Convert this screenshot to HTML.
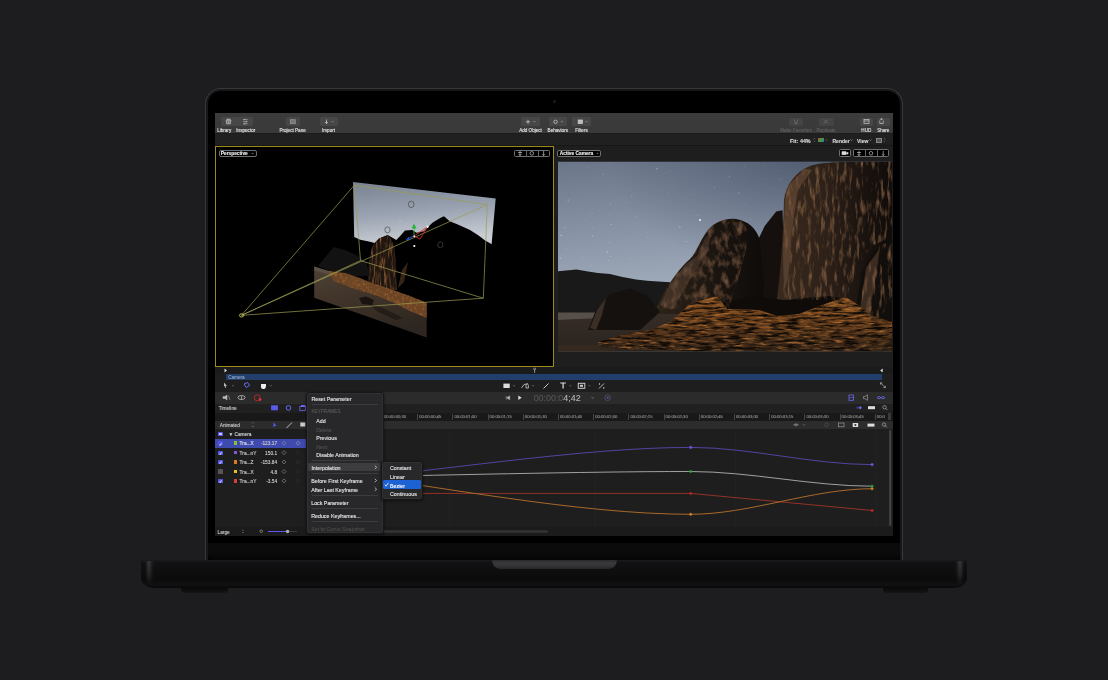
<!DOCTYPE html>
<html><head><meta charset="utf-8">
<style>
html,body{margin:0;padding:0;width:1108px;height:680px;overflow:hidden;background:#1d1d1f;}
*{box-sizing:border-box;}
.a{position:absolute;}
body{font-family:"Liberation Sans",sans-serif;color:#ddd;}
#lid{left:205px;top:88px;width:698px;height:473px;border-radius:16px 16px 0 0;background:#171719;border:1px solid #38383a;border-bottom:none;}
#bez{left:208px;top:91px;width:692px;height:470px;border-radius:13px 13px 0 0;background:#000;}
#chin{left:208px;top:543px;width:692px;height:17px;background:linear-gradient(#0b0b0b,#0a0a0a 60%,#050505);border-radius:0 0 4px 4px;}
#base{left:140.8px;top:560.1px;width:826.4px;height:28.1px;border-radius:0 0 12px 12px / 0 0 10px 10px;background:linear-gradient(#1a1a1c 0%,#111113 10%,#0d0d0e 50%,#0b0b0c 70%,#111112 88%,#09090a 100%);}
.t{position:absolute;white-space:nowrap;line-height:1;filter:blur(0.15px);-webkit-text-stroke:0.12px currentColor;}
svg{position:absolute;left:0;top:0;}
</style></head><body>
<div class="a" id="lid"></div>
<div class="a" id="bez"></div>
<div class="a" id="chin"></div>
<div class="a" style="left:552.6px;top:100.2px;width:3px;height:3px;border-radius:50%;background:#17181c"></div>
<div class="a" id="base"></div>
<div class="a" style="left:144.5px;top:560.5px;width:9px;height:24px;border-radius:0 0 0 6px;background:linear-gradient(90deg,rgba(60,60,62,0) 0%,rgba(60,60,62,0.9) 45%,rgba(50,50,52,0.5) 70%,rgba(40,40,42,0) 100%);-webkit-mask-image:linear-gradient(#000 10%,rgba(0,0,0,0.6) 60%,rgba(0,0,0,0) 100%)"></div>
<div class="a" style="left:954.5px;top:560.5px;width:9px;height:24px;background:linear-gradient(270deg,rgba(60,60,62,0) 0%,rgba(60,60,62,0.9) 45%,rgba(50,50,52,0.5) 70%,rgba(40,40,42,0) 100%);-webkit-mask-image:linear-gradient(#000 10%,rgba(0,0,0,0.6) 60%,rgba(0,0,0,0) 100%)"></div>
<div class="a" style="left:491.5px;top:560.2px;width:125px;height:9px;border-radius:0 0 8px 8px / 0 0 9px 9px;background:linear-gradient(#2a2a2c,#3a3a3c 35%,#333335 70%,#262628)"></div>
<div class="a" style="left:181.4px;top:588px;width:47px;height:4.6px;border-radius:0 0 4px 4px;background:linear-gradient(#0a0a0b,#141415)"></div>
<div class="a" style="left:882.5px;top:588px;width:45px;height:4.6px;border-radius:0 0 4px 4px;background:linear-gradient(#0a0a0b,#141415)"></div>

<!-- screen blocks (page coords) -->
<div class="a" style="left:215px;top:113px;width:678px;height:423px;background:#1e1e1e"></div>
<div class="a" style="left:215px;top:113px;width:678px;height:21px;background:linear-gradient(#3c3c3c,#393939);border-bottom:0.6px solid #1c1c1c"></div>
<div class="a" style="left:215px;top:134px;width:678px;height:12px;background:#202021;border-bottom:0.7px solid #161616"></div>
<div class="a" style="left:215px;top:146px;width:339px;height:221.4px;background:#000;border:1px solid #9c8a1e"></div>
<div class="a" style="left:554px;top:146px;width:339px;height:221.4px;background:#1e1e1f"></div>
<div class="a" style="left:215px;top:367.4px;width:678px;height:6.4px;background:#1b1b1b"></div>
<div class="a" style="left:226.4px;top:373.8px;width:655.6px;height:6.2px;background:#213f6a"></div>
<div class="a" style="left:215px;top:380px;width:678px;height:11.5px;background:#1e1e1e"></div>
<div class="a" style="left:215px;top:391.5px;width:678px;height:12px;background:#2b2b2b"></div>
<div class="a" style="left:215px;top:403.5px;width:678px;height:9px;background:#202020"></div>
<div class="a" style="left:215px;top:412.5px;width:678px;height:8.5px;background:#191919"></div>
<div class="a" style="left:215px;top:421px;width:678px;height:8px;background:#2c2c2c"></div>
<div class="a" style="left:215px;top:429px;width:678px;height:98px;background:#1e1e1e"></div>
<div class="a" style="left:215px;top:527px;width:678px;height:9px;background:#1b1b1b"></div>

<!-- CURVES -->
<svg width="1108" height="680" viewBox="0 0 1108 680">
<g stroke="#262626" stroke-width="0.6"><path d="M450 429 V527 M595 429 V527 M735.3 429 V527 M876 429 V527"/></g>
<g fill="none" stroke-width="0.95">
<path d="M310 482.5 C440 471.5 580 447.4 690.7 447.4 C750 447.4 812 464.6 872.1 464.6" stroke="#5844a8"/>
<path d="M310 477.5 C440 475.5 580 471.5 690.7 471.5 C750 471.5 812 486.2 872.1 486.2" stroke="#a8a8a8"/>
<path d="M310 493.4 L690.7 493.4 L872.1 510.5" stroke="#983428"/>
<path d="M310 469 C440 486.5 580 514.3 690.7 514.3 C750 514.3 812 488.7 872.1 488.7" stroke="#b06e2a"/>
</g>
<g stroke-width="0.6">
<circle cx="690.7" cy="447.4" r="1.3" fill="#7a58e0" stroke="#5a40b0"/>
<circle cx="690.7" cy="471.5" r="1.2" fill="#30b040" stroke="#208a30"/>
<circle cx="690.7" cy="493.4" r="1.2" fill="#d02a2a" stroke="#a02020"/>
<circle cx="690.7" cy="514.3" r="1.2" fill="#e08a30" stroke="#b06820"/>
<circle cx="872.1" cy="464.6" r="1.3" fill="#7a58e0" stroke="#5a40b0"/>
<circle cx="872.1" cy="486.2" r="1.2" fill="#30b040" stroke="#208a30"/>
<circle cx="872.1" cy="488.7" r="1.2" fill="#e08a30" stroke="#b06820"/>
<circle cx="872.1" cy="510.5" r="1.2" fill="#d02a2a" stroke="#a02020"/>
</g>
<rect x="889.2" y="430" width="2" height="96" rx="1" fill="#444"/>
</svg>
<!-- PHOTO -->
<svg width="1108" height="680" viewBox="0 0 1108 680">
<defs>
<clipPath id="pc"><rect x="558" y="161.8" width="334" height="189.4"/></clipPath>
<linearGradient id="sky" x1="0" y1="0" x2="0.15" y2="1">
<stop offset="0" stop-color="#6a7588"/><stop offset="0.5" stop-color="#919cae"/><stop offset="1" stop-color="#b8c1cc"/></linearGradient>
<radialGradient id="skyd" cx="0.75" cy="0" r="0.6">
<stop offset="0" stop-color="#2e3850" stop-opacity="0.45"/><stop offset="1" stop-color="#2e3850" stop-opacity="0"/></radialGradient>
<linearGradient id="gnd" x1="0" y1="0" x2="0" y2="1">
<stop offset="0" stop-color="#3a302a"/><stop offset="1" stop-color="#2a231e"/></linearGradient>
<linearGradient id="cliff" x1="0" y1="0" x2="1" y2="0">
<stop offset="0" stop-color="#3a2a1e"/><stop offset="0.45" stop-color="#2c2018"/><stop offset="0.75" stop-color="#1a130f"/><stop offset="1" stop-color="#100c0a"/></linearGradient>
<linearGradient id="dome" x1="0" y1="0" x2="1" y2="0">
<stop offset="0" stop-color="#302419"/><stop offset="0.45" stop-color="#1e1712"/><stop offset="1" stop-color="#0e0b09"/></linearGradient>
<linearGradient id="grs" x1="0" y1="0" x2="0" y2="1" gradientUnits="objectBoundingBox">
<stop offset="0" stop-color="#8a5628"/><stop offset="0.35" stop-color="#74461f"/><stop offset="0.75" stop-color="#4e321c"/><stop offset="1" stop-color="#30241a"/></linearGradient>
<filter id="tex" x="0" y="0" width="1" height="1" color-interpolation-filters="sRGB">
<feTurbulence type="fractalNoise" baseFrequency="0.25 0.06" numOctaves="3" seed="3"/>
<feColorMatrix type="matrix" values="0 0 0 0 0.50  0 0 0 0 0.36  0 0 0 0 0.25  2.8 0 0 0 -1.4"/>
</filter>
<filter id="texd" x="0" y="0" width="1" height="1" color-interpolation-filters="sRGB">
<feTurbulence type="fractalNoise" baseFrequency="0.2 0.08" numOctaves="2" seed="11"/>
<feColorMatrix type="matrix" values="0 0 0 0 0.05  0 0 0 0 0.04  0 0 0 0 0.03  2.4 0 0 0 -1.0"/>
</filter>
<filter id="tex2" x="0" y="0" width="1" height="1" color-interpolation-filters="sRGB">
<feTurbulence type="fractalNoise" baseFrequency="0.09 0.45" numOctaves="3" seed="7"/>
<feColorMatrix type="matrix" values="0 0 0 0 0.74  0 0 0 0 0.45  0 0 0 0 0.2  2.4 0 0 0 -1.15"/>
<feGaussianBlur stdDeviation="0.35"/>
</filter>
<filter id="tex3" x="0" y="0" width="1" height="1" color-interpolation-filters="sRGB">
<feTurbulence type="fractalNoise" baseFrequency="0.07 0.4" numOctaves="3" seed="5"/>
<feColorMatrix type="matrix" values="0 0 0 0 0.06  0 0 0 0 0.04  0 0 0 0 0.02  3.0 0 0 0 -1.2"/>
<feGaussianBlur stdDeviation="0.3"/>
</filter>
<filter id="texdome" x="0" y="0" width="1" height="1" color-interpolation-filters="sRGB">
<feTurbulence type="fractalNoise" baseFrequency="0.14 0.09" numOctaves="3" seed="21"/>
<feColorMatrix type="matrix" values="0 0 0 0 0.44  0 0 0 0 0.32  0 0 0 0 0.23  2.4 0 0 0 -1.05"/>
</filter>
<filter id="soft" color-interpolation-filters="sRGB"><feGaussianBlur stdDeviation="0.5"/></filter>
<clipPath id="litc"><path d="M784 300 C782 260 783 230 784.5 200 C786 185 795 172 810 166 C820 162 850 161 892 161 L892 236 L872 246 L860 262 L846 300 Z M856 330 L866 268 L880 246 L892 240 L892 300 L872 330 Z"/></clipPath>
<clipPath id="domec"><path d="M657 308 C662 295 675 272 690 259 C697 252 700 240 708 230 C716 221 726 218 736 219 C744 220 750 226 746 250 L738 280 L728 310 Z"/></clipPath>
<clipPath id="grassc"><path d="M598 342 L625 334 L650 330 L670 322 L690 304 L717 296 L727 309 L759 310 L777 316 L799 314 L825 304 L845 297 L854 302 L872 316 L892 322 L892 352 L700 352 L600 348 Z"/></clipPath>
</defs>
<g clip-path="url(#pc)">
<rect x="557" y="161" width="336" height="191" fill="url(#sky)"/>
<rect x="557" y="161" width="336" height="191" fill="url(#skyd)"/>
<g fill="#fff">
<circle cx="700" cy="220" r="0.9"/><circle cx="763.9" cy="165.0" r="0.35" opacity="0.46"/><circle cx="602.9" cy="174.1" r="0.5" opacity="0.39"/><circle cx="693.9" cy="165.5" r="0.3" opacity="0.45"/><circle cx="693.1" cy="215.0" r="0.35" opacity="0.71"/><circle cx="560.1" cy="257.1" r="0.4" opacity="0.50"/><circle cx="666.4" cy="172.9" r="0.3" opacity="0.51"/><circle cx="668.8" cy="193.2" r="0.3" opacity="0.68"/><circle cx="679.9" cy="227.1" r="0.5" opacity="0.75"/><circle cx="674.4" cy="184.7" r="0.3" opacity="0.37"/><circle cx="631.4" cy="196.1" r="0.3" opacity="0.73"/><circle cx="610.4" cy="203.9" r="0.35" opacity="0.67"/><circle cx="778.1" cy="170.4" r="0.3" opacity="0.59"/><circle cx="636.8" cy="216.5" r="0.35" opacity="0.80"/><circle cx="568.3" cy="199.2" r="0.35" opacity="0.38"/><circle cx="765.0" cy="178.9" r="0.3" opacity="0.46"/><circle cx="738.8" cy="193.0" r="0.5" opacity="0.54"/><circle cx="745.9" cy="204.7" r="0.3" opacity="0.58"/><circle cx="587.3" cy="167.6" r="0.3" opacity="0.42"/><circle cx="609.5" cy="242.3" r="0.5" opacity="0.38"/><circle cx="835.2" cy="163.4" r="0.3" opacity="0.66"/><circle cx="730.9" cy="193.5" r="0.35" opacity="0.40"/><circle cx="698.0" cy="215.5" r="0.35" opacity="0.79"/><circle cx="592.3" cy="235.8" r="0.5" opacity="0.62"/><circle cx="607.2" cy="252.0" r="0.5" opacity="0.78"/><circle cx="750.9" cy="219.7" r="0.3" opacity="0.77"/><circle cx="657.0" cy="168.8" r="0.5" opacity="0.78"/><circle cx="585.6" cy="219.3" r="0.3" opacity="0.79"/><circle cx="729.5" cy="176.8" r="0.4" opacity="0.78"/><circle cx="611.2" cy="224.3" r="0.5" opacity="0.54"/><circle cx="626.2" cy="225.6" r="0.3" opacity="0.67"/><circle cx="686.5" cy="241.3" r="0.35" opacity="0.55"/><circle cx="724.7" cy="176.3" r="0.3" opacity="0.38"/><circle cx="564.8" cy="227.4" r="0.5" opacity="0.45"/><circle cx="580.9" cy="236.5" r="0.3" opacity="0.38"/><circle cx="568.1" cy="201.0" r="0.5" opacity="0.46"/><circle cx="773.4" cy="187.3" r="0.3" opacity="0.68"/><circle cx="636.2" cy="217.8" r="0.4" opacity="0.44"/><circle cx="589.2" cy="212.9" r="0.4" opacity="0.53"/><circle cx="577.5" cy="247.9" r="0.3" opacity="0.46"/><circle cx="619.2" cy="214.9" r="0.4" opacity="0.43"/><circle cx="582.3" cy="257.3" r="0.5" opacity="0.39"/><circle cx="562.8" cy="173.0" r="0.3" opacity="0.42"/><circle cx="714.4" cy="187.2" r="0.4" opacity="0.76"/><circle cx="611.0" cy="162.3" r="0.4" opacity="0.47"/><circle cx="746.1" cy="221.3" r="0.5" opacity="0.42"/><circle cx="617.8" cy="232.2" r="0.3" opacity="0.53"/><circle cx="744.4" cy="166.7" r="0.3" opacity="0.54"/><circle cx="685.4" cy="241.3" r="0.35" opacity="0.56"/><circle cx="561.0" cy="235.3" r="0.5" opacity="0.80"/><circle cx="581.6" cy="187.2" r="0.35" opacity="0.41"/><circle cx="670.4" cy="170.1" r="0.3" opacity="0.52"/><circle cx="608.8" cy="260.4" r="0.35" opacity="0.63"/><circle cx="560.5" cy="258.4" r="0.35" opacity="0.77"/><circle cx="591.4" cy="265.6" r="0.35" opacity="0.40"/><circle cx="592.5" cy="227.3" r="0.35" opacity="0.48"/><circle cx="625.8" cy="202.5" r="0.35" opacity="0.58"/><circle cx="638.9" cy="269.2" r="0.3" opacity="0.39"/><circle cx="694.4" cy="194.6" r="0.3" opacity="0.50"/><circle cx="610.0" cy="214.1" r="0.4" opacity="0.60"/><circle cx="780.5" cy="179.6" r="0.3" opacity="0.73"/><circle cx="745.6" cy="179.5" r="0.3" opacity="0.37"/><circle cx="673.2" cy="242.5" r="0.3" opacity="0.51"/><circle cx="610.3" cy="256.4" r="0.3" opacity="0.75"/><circle cx="566.0" cy="248.9" r="0.35" opacity="0.70"/><circle cx="690.6" cy="241.0" r="0.3" opacity="0.47"/><circle cx="629.6" cy="258.4" r="0.4" opacity="0.51"/><circle cx="629.8" cy="239.9" r="0.4" opacity="0.50"/><circle cx="647.9" cy="237.7" r="0.4" opacity="0.66"/><circle cx="566.9" cy="265.5" r="0.35" opacity="0.43"/><circle cx="592.9" cy="213.3" r="0.35" opacity="0.55"/>
</g>
<rect x="555" y="318" width="340" height="36" fill="#2e2620"/>
<g filter="url(#soft)">
<path d="M555 271.5 L566 270.5 L576.5 269.5 L588 271.5 L598 273 L610 274 L622.5 277 L636 279.5 L647 280.7 L670 282.3 L690 290 L690 315 L555 315 Z" fill="#1a1919"/>
<rect x="555" y="312.5" width="45" height="8" fill="#57504a"/>
<path d="M555 320 L600 318 L660 312 L892 300 L892 352 L555 352 Z" fill="url(#gnd)"/>
<!-- behind dark rock -->
<path d="M752 312 L758 240 L764.7 226 L776.2 211.6 L782.5 210.2 L786 312 Z" fill="#15100e"/>
<!-- dome -->
<path d="M652 314 L657 307 C662 295 675 272 690 259 C697 252 700 240 708 230 C716 221 726 218 736 219 C748 221 756 228 760 240 L764 290 L758 314 Z" fill="url(#dome)"/>
<!-- cliff -->
<path d="M776 305 C780 280 783 240 784 200 C786 185 795 172 810 166 C820 162 850 161 892 161 L892 352 L780 352 Z" fill="url(#cliff)"/>
<path d="M852 330 L862 272 L874 250 L892 240 L892 352 L850 352 Z" fill="#120e0b"/>
<!-- left small rock -->
<path d="M588 330 L596 310 L610 294 L630 288.5 L648 296 L660 312 L640 330 Z" fill="#15110f"/>
<path d="M590 328 L597 310 L606 298 L602 315 L596 330 Z" fill="#4a3a30" opacity="0.7"/>
<!-- foreground dark rocks -->
<path d="M700 330 L722 304 L752 296 L784 300 L830 296 L850 300 L845 330 L740 338 Z" fill="#0f0b09"/>
</g>
<g clip-path="url(#litc)" filter="url(#soft)"><rect x="650" y="161" width="243" height="191" filter="url(#tex)"/></g>
<g clip-path="url(#domec)" filter="url(#soft)"><rect x="650" y="210" width="120" height="110" filter="url(#texdome)"/></g>
<!-- lit edges -->
<path d="M784.8 200 L790.6 183 L804.9 168.6 L812 170 L798 190 L792 230 L788 280 L784 290 L783 255 Z" fill="#7a5a42" opacity="0.45" filter="url(#soft)"/>
<path d="M660 305 L670 284 L686 264 L697 256 L704 240 L712 230 L708 250 L696 270 L684 290 L672 310 Z" fill="#6e5240" opacity="0.35" filter="url(#soft)"/>
<path d="M857 330 L866 268 L880 248 L874 290 L864 330 Z" fill="#7a5840" opacity="0.4" filter="url(#soft)"/>
<!-- grass -->
<path d="M598 342 L625 334 L650 330 L670 322 L690 304 L717 296 L727 309 L759 310 L777 316 L799 314 L825 304 L845 297 L854 302 L872 316 L892 322 L892 352 L700 352 L600 348 Z" fill="url(#grs)" filter="url(#soft)"/>
<g clip-path="url(#grassc)"><rect x="590" y="270" width="303" height="82" filter="url(#tex2)"/><rect x="590" y="270" width="303" height="82" filter="url(#tex3)"/></g>
<rect x="555" y="345" width="60" height="8" fill="#3a2c20" opacity="0.6"/>
</g>
</svg>
<!-- PERSPECTIVE -->
<svg width="1108" height="680" viewBox="0 0 1108 680">
<defs>
<clipPath id="lvc"><rect x="216" y="147" width="337" height="219.4"/></clipPath>
<linearGradient id="psky" x1="0" y1="0" x2="0.2" y2="1">
<stop offset="0" stop-color="#78818f"/><stop offset="0.55" stop-color="#9aa3b2"/><stop offset="1" stop-color="#c8cdd3"/></linearGradient>
<linearGradient id="pgnd" x1="0" y1="0" x2="0.3" y2="1">
<stop offset="0" stop-color="#4e4034"/><stop offset="0.5" stop-color="#40342a"/><stop offset="1" stop-color="#2e2620"/></linearGradient>
<clipPath id="pgc"><path d="M328 271 L345 273 L360 278 L372 283 L390 289 L410 296 L426.7 302.8 L426.7 318 L410 311 L392 302 L375 295 L352 288 L334 281 Z"/></clipPath>
<clipPath id="plit"><path d="M367 290 L369 262 L372 247 L374.7 242.9 L379 238.5 L383 237 L387.7 234.9 L391 238.5 L394 246 L396 262 L397 290 Z"/></clipPath>
<filter id="ptex" x="0" y="0" width="1" height="1" color-interpolation-filters="sRGB">
<feTurbulence type="fractalNoise" baseFrequency="0.4 0.3" numOctaves="2" seed="4"/>
<feColorMatrix type="matrix" values="0 0 0 0 0.64  0 0 0 0 0.40  0 0 0 0 0.2  2.0 0 0 0 -0.95"/>
</filter>
<filter id="ptex2" x="0" y="0" width="1" height="1" color-interpolation-filters="sRGB">
<feTurbulence type="fractalNoise" baseFrequency="0.5 0.07" numOctaves="2" seed="9"/>
<feColorMatrix type="matrix" values="0 0 0 0 0.58  0 0 0 0 0.38  0 0 0 0 0.22  2.6 0 0 0 -1.2"/>
</filter>
</defs>
<g clip-path="url(#lvc)">
<!-- back plane (sky + rocks) -->
<path d="M353 181.9 L495.7 198.4 L491.6 244.3 L484.4 240 L478.6 235.6 L470 229.9 L458.4 224.8 L449.7 221.2 L444 216.2 L441.1 217.6 L432.4 222.7 L423.8 231.3 L416.5 232.8 L412.2 229.9 L405 230.6 L400.6 235.6 L396.3 240 L387.7 234.9 L379 238.5 L374.7 242.9 L368.9 241.4 L360.2 239.7 L354.2 237.1 Z" fill="url(#psky)"/>
<!-- lit rock -->
<path d="M367 290 L369 262 L372 247 L374.7 242.9 L379 238.5 L383 237 L387.7 234.9 L391 238.5 L394 246 L396 262 L397 290 Z" fill="#1e150f"/>
<g clip-path="url(#plit)"><rect x="364" y="233" width="34" height="58" filter="url(#ptex2)"/></g>
<path d="M398 288 L402 270 L408 262 L404 282 Z" fill="#6a4a30" opacity="0.5"/>
<!-- dim mountains between planes -->
<path d="M318 266 L333.7 247 L345 250 L358 256 L366 262 L370 276 L340 276 Z" fill="#131212"/>
<!-- ground plane -->
<path d="M314.2 266.4 L426.7 302.8 L426.7 337.4 L314.2 297.7 Z" fill="url(#pgnd)"/>
<path d="M314.2 266.4 L340 274.5 L338 277 L314.2 270.5 Z" fill="#5e544a" opacity="0.8"/>
<path d="M328 271 L345 273 L360 278 L372 283 L390 289 L410 296 L426.7 302.8 L426.7 318 L410 311 L392 302 L375 295 L352 288 L334 281 Z" fill="#6a4424"/>
<g clip-path="url(#pgc)"><rect x="314" y="266" width="114" height="72" filter="url(#ptex)"/></g>
<path d="M359 298 L366 296.5 L374 300 L372 305 L362 304 Z" fill="#15110e" opacity="0.9"/>
<path d="M368 303 L385 309 L403 318 L396 320 L378 312 Z" fill="#18130f" opacity="0.6"/>
<!-- stars -->
<g fill="#dde"><circle cx="400" cy="221" r="0.5"/><circle cx="430" cy="204" r="0.3"/><circle cx="375" cy="200" r="0.3"/><circle cx="460" cy="210" r="0.3"/></g>
<!-- circles -->
<g fill="none" stroke="#3a3a3a" stroke-width="0.6">
<ellipse cx="411.2" cy="204.4" rx="2.8" ry="3.2"/><ellipse cx="387.5" cy="229.9" rx="2.6" ry="3"/><ellipse cx="440.3" cy="244.8" rx="2.6" ry="3" stroke="#555"/>
</g>
<!-- wireframe -->
<g fill="none" stroke="#9c9c52" stroke-width="0.75" opacity="0.95">
<path d="M354.4 185.1 L487.3 204.6 L483.3 298.2 L360.5 260.6 Z"/>
<path d="M241.5 315.3 L354.4 185.1 M241.5 315.3 L487.3 204.6 M241.5 315.3 L483.3 298.2 M241.5 315.3 L360.5 260.6"/>
</g>
<ellipse cx="241.6" cy="315.4" rx="2.2" ry="1.6" fill="none" stroke="#c8c85a" stroke-width="0.9"/>
<!-- gizmo -->
<g stroke-width="0.9" fill="none">
<path d="M414 236 L414 227" stroke="#28b43c"/>
<path d="M414 236 L408 238.5" stroke="#2850d8"/>
<path d="M414 236 L427.5 227 L420 239 Z" stroke="#d02828"/>
</g>
<path d="M411.5 228.5 L414 223.5 L416.5 228.5 Z" fill="#28b43c"/>
<path d="M409 237 L405.5 239.5 L410 240 Z" fill="#2850d8"/>
<circle cx="427.6" cy="226.8" r="1.1" fill="#fff"/>
<circle cx="414.3" cy="246" r="1.1" fill="#fff"/>
<circle cx="414.3" cy="236.3" r="0.9" fill="#fff"/>
</g>
</svg>
<!-- UI -->
<div class="a" style="left:221px;top:117.4px;width:32px;height:8.6px;background:#474747;border-radius:1.5px"></div>
<div class="a" style="left:285.5px;top:117.4px;width:14.5px;height:8.6px;background:#474747;border-radius:1.5px"></div>
<div class="a" style="left:319.8px;top:117.4px;width:18px;height:8.6px;background:#474747;border-radius:1.5px"></div>
<div class="a" style="left:521.3px;top:117.4px;width:18.4px;height:8.6px;background:#474747;border-radius:1.5px"></div>
<div class="a" style="left:548.7px;top:117.4px;width:18.3px;height:8.6px;background:#474747;border-radius:1.5px"></div>
<div class="a" style="left:572.2px;top:117.4px;width:18.8px;height:8.6px;background:#474747;border-radius:1.5px"></div>
<div class="a" style="left:789px;top:117.5px;width:14px;height:8.2px;background:#444;border-radius:1.5px"></div>
<div class="a" style="left:819px;top:117.5px;width:14.5px;height:8.2px;background:#444;border-radius:1.5px"></div>
<div class="a" style="left:860px;top:117.5px;width:13px;height:8.2px;background:#474747;border-radius:1.5px"></div>
<div class="a" style="left:877px;top:117.5px;width:13px;height:8.2px;background:#474747;border-radius:1.5px"></div>
<div class="t" style="left:164.2px;width:120px;text-align:center;top:129.19px;font-size:4.6px;color:#e2e2e2;font-weight:normal;">Library</div>
<div class="t" style="left:185.8px;width:120px;text-align:center;top:129.19px;font-size:4.6px;color:#e2e2e2;font-weight:normal;">Inspector</div>
<div class="t" style="left:232.60000000000002px;width:120px;text-align:center;top:129.19px;font-size:4.6px;color:#e2e2e2;font-weight:normal;">Project Pane</div>
<div class="t" style="left:268.5px;width:120px;text-align:center;top:129.19px;font-size:4.6px;color:#e2e2e2;font-weight:normal;">Import</div>
<div class="t" style="left:470.5px;width:120px;text-align:center;top:129.19px;font-size:4.6px;color:#e2e2e2;font-weight:normal;">Add Object</div>
<div class="t" style="left:497.79999999999995px;width:120px;text-align:center;top:129.19px;font-size:4.6px;color:#e2e2e2;font-weight:normal;">Behaviors</div>
<div class="t" style="left:521.5px;width:120px;text-align:center;top:129.19px;font-size:4.6px;color:#e2e2e2;font-weight:normal;">Filters</div>
<div class="t" style="left:736px;width:120px;text-align:center;top:129.19px;font-size:4.6px;color:#5e5e5e;font-weight:normal;">Make Favorites</div>
<div class="t" style="left:766px;width:120px;text-align:center;top:129.19px;font-size:4.6px;color:#5e5e5e;font-weight:normal;">Replicate</div>
<div class="t" style="left:806.3px;width:120px;text-align:center;top:129.19px;font-size:4.6px;color:#e2e2e2;font-weight:normal;">HUD</div>
<div class="t" style="left:823.3px;width:120px;text-align:center;top:129.19px;font-size:4.6px;color:#e2e2e2;font-weight:normal;">Share</div>
<svg width="1108" height="680" viewBox="0 0 1108 680">
<g fill="none" stroke="#d8d8d8" stroke-width="0.7">
<path d="M226.2 120.2 h4.6 l-0.5 3.6 h-3.6 z M227 120.2 v-1 h3 v1"/><circle cx="228.5" cy="122" r="0.8"/>
<path d="M243 119.6 h4.6 M243 121.7 h4.6 M243 123.8 h4.6" stroke-width="0.5"/><path d="M244.3 119 v1.2 M246.5 121.1 v1.2 M244.8 123.2 v1.2" stroke-width="0.7"/>
<rect x="290.3" y="119.7" width="5" height="4" fill="#777" stroke="#999"/>
<path d="M326.5 119.5 v4 M325 122 l1.5 1.6 l1.5 -1.6"/>
<path d="M331.7 121.2 l0.9 0.9 l0.9 -0.9" stroke="#aaa"/>
<path d="M528 119.8 v4 M526 121.8 h4"/>
<path d="M533.5 121.2 l0.9 0.9 l0.9 -0.9" stroke="#aaa"/>
<circle cx="555.5" cy="121.8" r="1.7"/>
<path d="M561 121.2 l0.9 0.9 l0.9 -0.9" stroke="#aaa"/>
<rect x="578.2" y="120" width="4.2" height="3.5" fill="#bbb"/>
<path d="M585.5 121.2 l0.9 0.9 l0.9 -0.9" stroke="#aaa"/>
<path d="M794 119.5 l1 2 v2 h2 v-2 l1 -2" stroke="#777"/>
<path d="M824 119.5 l4 4 M828 119.5 l-4 4" stroke="#777"/>
<rect x="864" y="119.5" width="5" height="4" stroke="#ccc"/>
<path d="M864 121 h5" stroke="#ccc"/>
<path d="M881.5 120 v-1.5 l0.0 0 M880.2 119.6 l1.3 -1.3 l1.3 1.3 M879.8 120.5 v3 h3.4 v-3" stroke="#ccc"/>
</g>
</svg>
<div class="t" style="left:790px;top:138.91000000000003px;font-size:5.4px;color:#d8d8d8;font-weight:bold;">Fit: 44%</div>
<div class="a" style="left:818px;top:137.6px;width:5.5px;height:4.6px;background:linear-gradient(135deg,#c04040,#40a040 50%,#4060d0);"></div>
<div class="t" style="left:832.5px;top:139.05px;font-size:5px;color:#d8d8d8;font-weight:bold;">Render</div>
<div class="t" style="left:857px;top:139.05px;font-size:5px;color:#d8d8d8;font-weight:bold;">View</div>
<div class="a" style="left:876px;top:137.5px;width:6px;height:5px;background:#555;border:0.6px solid #888"></div>
<div class="a" style="left:218.6px;top:149.6px;width:38px;height:7.4px;background:#000;border:0.7px solid #707070;border-radius:2px"></div>
<div class="t" style="left:220.8px;top:152.22px;font-size:4.8px;color:#f2f2f2;font-weight:bold;">Perspective</div>
<div class="a" style="left:514px;top:149.6px;width:35.6px;height:7.4px;background:#000;border:0.7px solid #707070;border-radius:1.5px"></div>
<div class="a" style="left:526px;top:149.6px;width:0.6px;height:7.4px;background:#666;"></div>
<div class="a" style="left:537.5px;top:149.6px;width:0.6px;height:7.4px;background:#666;"></div>
<div class="a" style="left:557.4px;top:149.6px;width:44px;height:7.4px;background:#000;border:0.7px solid #707070;border-radius:2px"></div>
<div class="t" style="left:559.8px;top:152.22px;font-size:4.8px;color:#f2f2f2;font-weight:bold;">Active Camera</div>
<div class="a" style="left:838.5px;top:149.4px;width:12.5px;height:7.6px;background:#000;border:0.7px solid #707070;border-radius:1.5px"></div>
<div class="a" style="left:853px;top:149.4px;width:36.4px;height:7.6px;background:#000;border:0.7px solid #707070;border-radius:1.5px"></div>
<div class="a" style="left:865px;top:149.4px;width:0.6px;height:7.6px;background:#666;"></div>
<div class="a" style="left:877px;top:149.4px;width:0.6px;height:7.6px;background:#666;"></div>
<svg width="1108" height="680" viewBox="0 0 1108 680">
<g fill="none" stroke="#e0e0e0" stroke-width="0.6">
<path d="M520 150.8 v5 M518 152.5 h4 M518.6 154 l1.4 1.5 l1.4 -1.5"/>
<circle cx="531.8" cy="153.3" r="1.8"/>
<path d="M543.6 151 v4.5 M542.3 154.3 l1.3 1.3 l1.3 -1.3"/>
<rect x="842" y="151.7" width="4" height="3" fill="#ddd"/><path d="M846 153.2 l2 -1 v2 z" fill="#ddd"/>
<path d="M859 150.8 v5 M857 152.5 h4 M857.6 154 l1.4 1.5 l1.4 -1.5"/>
<circle cx="871" cy="153.3" r="1.8"/>
<path d="M883.2 151 v4.5 M881.9 154.3 l1.3 1.3 l1.3 -1.3"/>
</g>
</svg>
<div class="t" style="left:228.2px;top:376.39px;font-size:4.6px;color:#8ea4c4;font-weight:normal;">Camera</div>
<svg width="1108" height="680" viewBox="0 0 1108 680">
<path d="M224.5 368.5 l2.5 2 l-2.5 2 z" fill="#ddd"/>
<path d="M882.7 368.5 l-2.5 2 l2.5 2 z" fill="#ddd"/>
<circle cx="534.6" cy="369" r="1" fill="none" stroke="#ccc" stroke-width="0.6"/><path d="M534.6 370 v3" stroke="#ccc" stroke-width="0.6"/>
<!-- tools row -->
<g fill="#bbb" stroke="none">
<path d="M224 382.5 l3 3.5 h-1.5 l0.8 2 h-0.8 l-0.8 -2 l-0.7 0.8 z"/>
</g>
<g fill="none" stroke="#999" stroke-width="0.6">
<path d="M232.3 385.3 l0.9 0.9 l0.9 -0.9 M269.8 385.3 l0.9 0.9 l0.9 -0.9 M513.2 385.3 l0.9 0.9 l0.9 -0.9 M532.3 385.3 l0.9 0.9 l0.9 -0.9 M569.5 385.3 l0.9 0.9 l0.9 -0.9 M588.5 385.3 l0.9 0.9 l0.9 -0.9"/>
</g>
<path d="M244 384 l3.5 -1.5 l2.2 3 l-3.5 2 z" fill="none" stroke="#6a6af0" stroke-width="1"/>
<path d="M261 384 v3 q0 2 2 2 h1.5 q1.5 -1 1.5 -3 v-2 z" fill="#eee"/>
<rect x="503.4" y="383.6" width="6.3" height="4.4" fill="#ddd"/>
<path d="M521.5 388 q2.5 -5 5 -4 M526 385.5 l1.2 -2.2 l1.2 2.2 v2.5 h-2.4 z" fill="none" stroke="#ccc" stroke-width="0.8"/>
<path d="M543.5 388.5 l5 -5" stroke="#ddd" stroke-width="0.9"/>
<path d="M560.3 383 h5.6 M563.1 383 v5.5" stroke="#ddd" stroke-width="1.2"/>
<rect x="578.3" y="383.3" width="6.5" height="5" fill="none" stroke="#ccc" stroke-width="1"/><rect x="580" y="384.8" width="3" height="2" fill="#ccc"/>
<path d="M599 388.5 l5 -5" stroke="#ddd" stroke-width="0.8"/><circle cx="599.5" cy="384" r="0.7" fill="#ddd"/><circle cx="603.8" cy="388" r="0.7" fill="#ddd"/>
<path d="M880.5 382.8 l4.8 4.8 M880.5 382.8 h1.8 M880.5 382.8 v1.8 M885.3 387.6 h-1.8 M885.3 387.6 v-1.8" stroke="#bbb" stroke-width="0.7"/>
<!-- transport row -->
<path d="M223 396.5 h2 l2 -1.5 v5 l-2 -1.5 h-2 z M228.5 395.5 l1.5 4.5" fill="#bbb" stroke="#bbb" stroke-width="0.5"/>
<ellipse cx="241.5" cy="397.5" rx="3.6" ry="2" fill="none" stroke="#ccc" stroke-width="0.7"/><path d="M241.5 396 v4" stroke="#ccc" stroke-width="0.6"/>
<circle cx="257.3" cy="397.8" r="3" fill="none" stroke="#cc2a2a" stroke-width="0.8"/><circle cx="260" cy="399.5" r="1.4" fill="#e03030"/>
<path d="M506.2 395.9 v3.8 M509.7 395.9 l-3 1.9 l3 1.9 z" fill="#bbb" stroke="#bbb" stroke-width="0.5"/>
<path d="M518.3 395.6 l3.4 2.2 l-3.4 2.2 z" fill="#ddd"/>
<path d="M591.6 397.3 l0.9 0.9 l0.9 -0.9" fill="none" stroke="#bbb" stroke-width="0.6"/>
<circle cx="607.6" cy="397.7" r="2.8" fill="none" stroke="#5a5a6a" stroke-width="0.7"/><circle cx="607.8" cy="397.6" r="0.9" fill="#6a5af0"/>
<rect x="849" y="395" width="4.5" height="5.3" fill="none" stroke="#6a6af0" stroke-width="0.8"/><path d="M849 397.6 h4.5" stroke="#6a6af0" stroke-width="0.6"/>
<path d="M863.5 396.5 h1.5 l2.5 -1.7 v5.6 l-2.5 -1.7 h-1.5 z" fill="none" stroke="#aaa" stroke-width="0.6"/>
<path d="M877 397.7 q2 -2.5 4 0 q2 2.5 4 0 q-2 -2.5 -4 0 q-2 2.5 -4 0" fill="none" stroke="#6a6af0" stroke-width="0.8"/>
<!-- timeline header -->
<rect x="271.1" y="405.3" width="6.8" height="5" fill="#5a5ae8"/>
<circle cx="288.5" cy="407.9" r="2.3" fill="none" stroke="#6a6af0" stroke-width="1"/>
<rect x="299.8" y="406.4" width="5.6" height="4" fill="none" stroke="#6a6af0" stroke-width="0.8"/><rect x="301" y="405" width="4.4" height="2" fill="#6a6af0"/>
<path d="M856 407.8 l1.5 -1.5 l1.5 1.5 l-1.5 1.5 z" fill="#3a3a7a"/><path d="M858.5 407.8 l1.7 -1.7 l1.7 1.7 l-1.7 1.7 z" fill="#6a6af0"/>
<rect x="868" y="406.2" width="7" height="3" fill="#ddd"/>
<circle cx="884.5" cy="407.2" r="1.7" fill="none" stroke="#bbb" stroke-width="0.6"/><path d="M885.7 408.4 l1.6 1.6" stroke="#bbb" stroke-width="0.7"/>
<!-- animated row -->
<path d="M273.4 422.5 l3.3 3.2 l-2 0.3 l-1.3 1.5 z" fill="#5a5ae8"/>
<path d="M286.5 428 l5.5 -5.5" stroke="#ddd" stroke-width="0.8"/>
<rect x="300.3" y="422.5" width="5" height="4" fill="#ccc"/>
<path d="M251.8 423.3 l1 -1 l1 1 M251.8 426 l1 1 l1 -1" fill="none" stroke="#999" stroke-width="0.5"/>
<path d="M796 423.5 l2.5 1.3 l-2.5 1.3 l-2.5 -1.3 z M798.5 424.8 h-5" fill="#777" stroke="#777" stroke-width="0.5"/>
<path d="M803.3 424.4 l0.9 0.9 l0.9 -0.9" fill="none" stroke="#999" stroke-width="0.6"/>
<circle cx="826.5" cy="424.8" r="1.8" fill="none" stroke="#555" stroke-width="0.6"/>
<rect x="838.5" y="423" width="5.5" height="3.8" fill="none" stroke="#aaa" stroke-width="0.6"/>
<rect x="852.7" y="423" width="5.5" height="4" fill="#ddd"/><circle cx="855.4" cy="425" r="1" fill="#333"/>
<rect x="867.5" y="423.6" width="7" height="3" fill="#ddd"/>
<circle cx="884" cy="424.5" r="1.7" fill="none" stroke="#bbb" stroke-width="0.6"/><path d="M885.2 425.7 l1.6 1.6" stroke="#bbb" stroke-width="0.7"/>
</svg>
<div class="t" style="left:533.7px;top:394.285px;font-size:8.9px;color:#b4b4b4;font-weight:normal;"><span style="color:#555">00:00:0</span>4;42</div>
<div class="t" style="left:218.8px;top:407.12px;font-size:4.8px;color:#c8c8c8;font-weight:normal;">Timeline</div>
<div class="t" style="left:219.7px;top:423.92px;font-size:4.8px;color:#c8c8c8;font-weight:normal;">Animated</div>
<div class="a" style="left:306px;top:412.5px;width:582px;height:8.2px;overflow:hidden"><div class="t" style="left:78.0px;top:2.6px;font-size:4.2px;color:#8c8c8c">00:00:00;30</div><div class="a" style="left:76.0px;top:1px;width:0.6px;height:6px;background:#444"></div><div class="t" style="left:113.19999999999999px;top:2.6px;font-size:4.2px;color:#8c8c8c">00:00:00;45</div><div class="a" style="left:111.19999999999999px;top:1px;width:0.6px;height:6px;background:#444"></div><div class="t" style="left:148.39999999999998px;top:2.6px;font-size:4.2px;color:#8c8c8c">00:00:01;00</div><div class="a" style="left:146.39999999999998px;top:1px;width:0.6px;height:6px;background:#444"></div><div class="t" style="left:183.60000000000002px;top:2.6px;font-size:4.2px;color:#8c8c8c">00:00:01;15</div><div class="a" style="left:181.60000000000002px;top:1px;width:0.6px;height:6px;background:#444"></div><div class="t" style="left:218.79999999999995px;top:2.6px;font-size:4.2px;color:#8c8c8c">00:00:01;30</div><div class="a" style="left:216.79999999999995px;top:1px;width:0.6px;height:6px;background:#444"></div><div class="t" style="left:254.0px;top:2.6px;font-size:4.2px;color:#8c8c8c">00:00:01;45</div><div class="a" style="left:252.0px;top:1px;width:0.6px;height:6px;background:#444"></div><div class="t" style="left:289.20000000000005px;top:2.6px;font-size:4.2px;color:#8c8c8c">00:00:02;00</div><div class="a" style="left:287.20000000000005px;top:1px;width:0.6px;height:6px;background:#444"></div><div class="t" style="left:324.4000000000001px;top:2.6px;font-size:4.2px;color:#8c8c8c">00:00:02;15</div><div class="a" style="left:322.4000000000001px;top:1px;width:0.6px;height:6px;background:#444"></div><div class="t" style="left:359.6px;top:2.6px;font-size:4.2px;color:#8c8c8c">00:00:02;30</div><div class="a" style="left:357.6px;top:1px;width:0.6px;height:6px;background:#444"></div><div class="t" style="left:394.79999999999995px;top:2.6px;font-size:4.2px;color:#8c8c8c">00:00:02;45</div><div class="a" style="left:392.79999999999995px;top:1px;width:0.6px;height:6px;background:#444"></div><div class="t" style="left:430.0px;top:2.6px;font-size:4.2px;color:#8c8c8c">00:00:03;00</div><div class="a" style="left:428.0px;top:1px;width:0.6px;height:6px;background:#444"></div><div class="t" style="left:465.20000000000005px;top:2.6px;font-size:4.2px;color:#8c8c8c">00:00:03;15</div><div class="a" style="left:463.20000000000005px;top:1px;width:0.6px;height:6px;background:#444"></div><div class="t" style="left:500.4000000000001px;top:2.6px;font-size:4.2px;color:#8c8c8c">00:00:03;30</div><div class="a" style="left:498.4000000000001px;top:1px;width:0.6px;height:6px;background:#444"></div><div class="t" style="left:535.6px;top:2.6px;font-size:4.2px;color:#8c8c8c">00:00:03;45</div><div class="a" style="left:533.6px;top:1px;width:0.6px;height:6px;background:#444"></div><div class="t" style="left:570.8000000000001px;top:2.6px;font-size:4.2px;color:#8c8c8c">00:0</div><div class="a" style="left:568.8000000000001px;top:1px;width:0.6px;height:6px;background:#444"></div></div>
<div class="a" style="left:888px;top:412.8px;width:3px;height:7.6px;background:#3a3a3a;"></div>
<div class="a" style="left:215.3px;top:438.8px;width:91px;height:8.8px;background:#3e4aae;"></div>
<div class="a" style="left:218.4px;top:431.7px;width:4.4px;height:4.4px;background:#5656e6;border-radius:0.6px"></div>
<div class="a" style="left:219.4px;top:432.7px;width:2.4px;height:2.4px;background:#c8c8ff;"></div>
<div class="t" style="left:228.4px;top:433.02px;font-size:4.8px;color:#d8d8d8;font-weight:normal;">&#9660; Camera</div>
<div class="a" style="left:218.4px;top:441.0px;width:4.4px;height:4.4px;background:#5656e6;border-radius:0.6px"></div>
<div class="t" style="left:218.9px;top:442.6px;font-size:4px;color:#fff;font-weight:normal;">&#10003;</div>
<div class="a" style="left:233.9px;top:441.45px;width:3.5px;height:3.5px;background:#82c232;"></div>
<div class="t" style="left:239.6px;top:442.32px;font-size:4.8px;color:#e0e0e0;font-weight:normal;">Tra...X</div>
<div class="t" style="left:157.10000000000002px;width:120px;text-align:right;top:442.32px;font-size:4.8px;color:#cfcfcf;font-weight:normal;">-123.17</div>
<svg width="1108" height="680" viewBox="0 0 1108 680"><path d="M284 441.2 l2 2 l-2 2 l-2 -2 z" fill="none" stroke="#999" stroke-width="0.6"/><path d="M298 441.2 l2 2 l-2 2 l-2 -2 z" fill="none" stroke="#aaa" stroke-width="0.6"/></svg>
<div class="a" style="left:218.4px;top:450.5px;width:4.4px;height:4.4px;background:#5656e6;border-radius:0.6px"></div>
<div class="t" style="left:218.9px;top:452.1px;font-size:4px;color:#fff;font-weight:normal;">&#10003;</div>
<div class="a" style="left:233.9px;top:450.95px;width:3.5px;height:3.5px;background:#8a56d6;"></div>
<div class="t" style="left:239.6px;top:451.82px;font-size:4.8px;color:#cfcfcf;font-weight:normal;">Tra...nY</div>
<div class="t" style="left:157.10000000000002px;width:120px;text-align:right;top:451.82px;font-size:4.8px;color:#cfcfcf;font-weight:normal;">150.1</div>
<svg width="1108" height="680" viewBox="0 0 1108 680"><path d="M284 450.7 l2 2 l-2 2 l-2 -2 z" fill="none" stroke="#999" stroke-width="0.6"/><path d="M298 450.7 l2 2 l-2 2 l-2 -2 z" fill="none" stroke="#333" stroke-width="0.6"/></svg>
<div class="a" style="left:218.4px;top:459.8px;width:4.4px;height:4.4px;background:#5656e6;border-radius:0.6px"></div>
<div class="t" style="left:218.9px;top:461.40000000000003px;font-size:4px;color:#fff;font-weight:normal;">&#10003;</div>
<div class="a" style="left:233.9px;top:460.25px;width:3.5px;height:3.5px;background:#e07a22;"></div>
<div class="t" style="left:239.6px;top:461.12px;font-size:4.8px;color:#cfcfcf;font-weight:normal;">Tra...Z</div>
<div class="t" style="left:157.10000000000002px;width:120px;text-align:right;top:461.12px;font-size:4.8px;color:#cfcfcf;font-weight:normal;">-153.84</div>
<svg width="1108" height="680" viewBox="0 0 1108 680"><path d="M284 460.0 l2 2 l-2 2 l-2 -2 z" fill="none" stroke="#999" stroke-width="0.6"/><path d="M298 460.0 l2 2 l-2 2 l-2 -2 z" fill="none" stroke="#333" stroke-width="0.6"/></svg>
<div class="a" style="left:218.4px;top:469.3px;width:4.4px;height:4.4px;background:#555;border-radius:0.6px"></div>
<div class="a" style="left:233.9px;top:469.75px;width:3.5px;height:3.5px;background:#e6c21e;"></div>
<div class="t" style="left:239.6px;top:470.62px;font-size:4.8px;color:#cfcfcf;font-weight:normal;">Tra...X</div>
<div class="t" style="left:157.10000000000002px;width:120px;text-align:right;top:470.62px;font-size:4.8px;color:#cfcfcf;font-weight:normal;">4.8</div>
<svg width="1108" height="680" viewBox="0 0 1108 680"><path d="M284 469.5 l2 2 l-2 2 l-2 -2 z" fill="none" stroke="#999" stroke-width="0.6"/><path d="M298 469.5 l2 2 l-2 2 l-2 -2 z" fill="none" stroke="#333" stroke-width="0.6"/></svg>
<div class="a" style="left:218.4px;top:478.7px;width:4.4px;height:4.4px;background:#5656e6;border-radius:0.6px"></div>
<div class="t" style="left:218.9px;top:480.3px;font-size:4px;color:#fff;font-weight:normal;">&#10003;</div>
<div class="a" style="left:233.9px;top:479.15px;width:3.5px;height:3.5px;background:#d44040;"></div>
<div class="t" style="left:239.6px;top:480.02px;font-size:4.8px;color:#cfcfcf;font-weight:normal;">Tra...nY</div>
<div class="t" style="left:157.10000000000002px;width:120px;text-align:right;top:480.02px;font-size:4.8px;color:#cfcfcf;font-weight:normal;">-3.54</div>
<svg width="1108" height="680" viewBox="0 0 1108 680"><path d="M284 478.9 l2 2 l-2 2 l-2 -2 z" fill="none" stroke="#999" stroke-width="0.6"/><path d="M298 478.9 l2 2 l-2 2 l-2 -2 z" fill="none" stroke="#333" stroke-width="0.6"/></svg>
<div class="t" style="left:217.5px;top:530.62px;font-size:4.8px;color:#c8c8c8;font-weight:normal;">Large</div>
<svg width="1108" height="680" viewBox="0 0 1108 680">
<circle cx="261.2" cy="531.2" r="1.3" fill="none" stroke="#aaa" stroke-width="0.6"/>
<path d="M268 531.5 h19" stroke="#5a5af0" stroke-width="1"/><path d="M289 531.5 h8" stroke="#444" stroke-width="0.8"/>
<circle cx="287.6" cy="531.5" r="1.7" fill="#aaa"/>
<rect x="306" y="530.3" width="242" height="2.4" rx="1.2" fill="#343434"/>
</svg>
<svg width="1108" height="680" viewBox="0 0 1108 680"><path d="M813.5 139.2 l0.8 -0.8 l0.8 0.8 M813.5 140.8 l0.8 0.8 l0.8 -0.8" fill="none" stroke="#999" stroke-width="0.5"/><path d="M825.6 139.55 l0.9 0.9 l0.9 -0.9" fill="none" stroke="#888" stroke-width="0.6"/><path d="M850.6 139.55 l0.9 0.9 l0.9 -0.9" fill="none" stroke="#ccc" stroke-width="0.6"/><path d="M869.6 139.55 l0.9 0.9 l0.9 -0.9" fill="none" stroke="#ccc" stroke-width="0.6"/><path d="M883.7 139.2 l0.8 -0.8 l0.8 0.8 M883.7 140.8 l0.8 0.8 l0.8 -0.8" fill="none" stroke="#999" stroke-width="0.5"/><path d="M251.6 152.95000000000002 l0.9 0.9 l0.9 -0.9" fill="none" stroke="#ccc" stroke-width="0.6"/><path d="M596.6 152.95000000000002 l0.9 0.9 l0.9 -0.9" fill="none" stroke="#ccc" stroke-width="0.6"/><path d="M242.2 530.6 l0.8 -0.8 l0.8 0.8 M242.2 532.1999999999999 l0.8 0.8 l0.8 -0.8" fill="none" stroke="#999" stroke-width="0.5"/></svg>
<!-- MENU -->
<div class="a" style="left:305.8px;top:391.6px;width:77.8px;height:142px;background:#28282a;border:0.8px solid #161617;border-radius:3px;box-shadow:0 1px 3px rgba(0,0,0,0.5), inset 0 0 0 0.5px #3a3a3c"></div>
<div class="t" style="left:311.4px;top:397.445px;font-size:5.3px;color:#e4e4e4;">Reset Parameter</div>
<div class="a" style="left:311.5px;top:404.0px;width:66px;height:0.6px;background:#3c3c3e;"></div>
<div class="a" style="left:311.5px;top:460.09999999999997px;width:66px;height:0.6px;background:#3c3c3e;"></div>
<div class="a" style="left:311.5px;top:472.8px;width:66px;height:0.6px;background:#3c3c3e;"></div>
<div class="a" style="left:311.5px;top:495.09999999999997px;width:66px;height:0.6px;background:#3c3c3e;"></div>
<div class="a" style="left:311.5px;top:508.09999999999997px;width:66px;height:0.6px;background:#3c3c3e;"></div>
<div class="a" style="left:311.5px;top:521.0px;width:66px;height:0.6px;background:#3c3c3e;"></div>
<div class="t" style="left:311.4px;top:410.49px;font-size:4.6px;color:#5a5a5a;letter-spacing:0.1px">KEYFRAMES</div>
<div class="t" style="left:316.3px;top:418.84499999999997px;font-size:5.3px;color:#e4e4e4;">Add</div>
<div class="t" style="left:316.3px;top:427.945px;font-size:5.3px;color:#505050;">Delete</div>
<div class="t" style="left:316.3px;top:436.445px;font-size:5.3px;color:#e4e4e4;">Previous</div>
<div class="t" style="left:316.3px;top:444.84499999999997px;font-size:5.3px;color:#505050;">Next</div>
<div class="t" style="left:316.3px;top:453.245px;font-size:5.3px;color:#e4e4e4;">Disable Animation</div>
<div class="a" style="left:308.2px;top:463px;width:71.8px;height:8.3px;background:#3d3d3f;border-radius:1.5px"></div>
<div class="t" style="left:311.4px;top:466.145px;font-size:5.3px;color:#e4e4e4;">Interpolation</div>
<div class="t" style="left:311.2px;top:479.445px;font-size:5.3px;color:#e4e4e4;">Before First Keyframe</div>
<div class="t" style="left:311.2px;top:488.145px;font-size:5.3px;color:#e4e4e4;">After Last Keyframe</div>
<div class="t" style="left:311.2px;top:501.045px;font-size:5.3px;color:#e4e4e4;">Lock Parameter</div>
<div class="t" style="left:311.2px;top:513.9449999999999px;font-size:5.3px;color:#e4e4e4;">Reduce Keyframes...</div>
<div class="t" style="left:311.2px;top:526.7449999999999px;font-size:5.3px;color:#4c4c4c;">Set to Curve Snapshot</div>
<svg width="1108" height="680" viewBox="0 0 1108 680"><g fill="none" stroke="#d8d8d8" stroke-width="0.75">
<path d="M374.8 465.6 l1.8 1.7 l-1.8 1.7 M374.8 478.8 l1.8 1.7 l-1.8 1.7 M374.8 487.5 l1.8 1.7 l-1.8 1.7"/></g></svg>
<div class="a" style="left:381.2px;top:460.8px;width:42px;height:38.8px;background:#28282a;border:0.8px solid #161617;border-radius:3px;box-shadow:0 1px 3px rgba(0,0,0,0.5), inset 0 0 0 0.5px #3a3a3c"></div>
<div class="a" style="left:383px;top:480.1px;width:38px;height:8.6px;background:#1d62d4;border-radius:1.5px"></div>
<div class="t" style="left:390px;top:466.34499999999997px;font-size:5.3px;color:#e4e4e4;">Constant</div>
<div class="t" style="left:390px;top:474.945px;font-size:5.3px;color:#e4e4e4;">Linear</div>
<div class="t" style="left:390px;top:483.545px;font-size:5.3px;color:#ffffff;">Bezier</div>
<div class="t" style="left:390px;top:492.34499999999997px;font-size:5.3px;color:#e4e4e4;">Continuous</div>
<svg width="1108" height="680" viewBox="0 0 1108 680"><path d="M384.8 484.6 l1.3 1.6 l2.3 -3.4" fill="none" stroke="#fff" stroke-width="0.8"/></svg>
</body></html>
